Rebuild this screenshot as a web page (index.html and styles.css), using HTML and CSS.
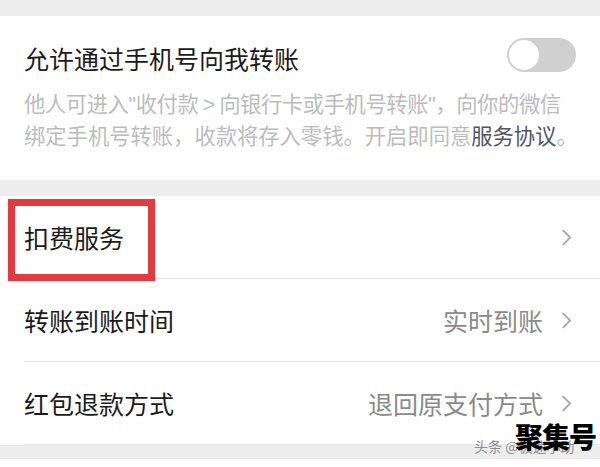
FILE: index.html
```html
<html>
    <head>
        <meta charset="UTF-8">
        <title>转账设置</title>
        <meta name="viewport" content="width=device-width, initial-scale=1.0">
        <link rel="stylesheet" href="styles.css">
    </head>
    <body>
        <div class="gap top-gap"></div>

        <section class="card phone-card">
            <div class="switch-row">
                <span class="title">允许通过手机号向我转账</span>
                <span class="toggle"><span class="knob"></span></span>
            </div>
            <p class="desc">
                <span class="line first">他人可进入<span class="q">"</span>收付款 <span class="q">&gt;</span> 向银行卡或手机号转账<span class="q">"</span>，向你的微信</span>
                <span class="line">绑定手机号转账，收款将存入零钱。开启即同意<span class="link">服务协议</span>。</span>
            </p>
        </section>

        <div class="gap mid-gap"></div>

        <section class="card list-card">
            <div class="row">
                <span class="label">扣费服务</span>
                <span class="value"></span>
                <svg class="chevron" viewBox="0 0 12 20"><path d="M2 2 L10 10 L2 18"/></svg>
            </div>
            <div class="row">
                <span class="label">转账到账时间</span>
                <span class="value">实时到账</span>
                <svg class="chevron" viewBox="0 0 12 20"><path d="M2 2 L10 10 L2 18"/></svg>
            </div>
            <div class="row">
                <span class="label">红包退款方式</span>
                <span class="value">退回原支付方式</span>
                <svg class="chevron" viewBox="0 0 12 20"><path d="M2 2 L10 10 L2 18"/></svg>
            </div>
            <div class="mark"></div>
        </section>

        <div class="gap bottom-gap"></div>
        <div class="tail"></div>

        <div class="watermark">
            <span class="wm-small">头条 @极速小助</span>
            <span class="wm-big">聚集号</span>
        </div>
    </body>
</html>
```

FILE: styles.css
```css
html {
    background-color: #ffffff;
}

body {
    margin: 0;
    width: 600px;
    height: 467px;
    overflow: hidden;
    position: relative;
    font-family: "Noto Sans CJK SC", "Noto Sans", sans-serif;
    color: #1b1b1b;
}

.gap {
    background-color: #ededed;
}

.top-gap { height: 16px; }
.mid-gap { height: 16px; }
.bottom-gap { height: 14px; }
.tail { height: 10px; background-color: #fff; }

.card {
    background-color: #fff;
}

.phone-card {
    height: 164px;
    padding: 0 24px;
    box-sizing: border-box;
}

.switch-row {
    display: flex;
    align-items: center;
    justify-content: space-between;
    height: 40px;
    padding-top: 22px;
}

.title {
    font-size: 25px;
    line-height: 40px;
}

.toggle {
    width: 69px;
    height: 34px;
    border-radius: 17px;
    background-color: #d0d0d0;
    display: flex;
    align-items: center;
    padding-left: 2px;
    box-sizing: border-box;
    margin-top: -6px;
}

.knob {
    width: 30px;
    height: 30px;
    border-radius: 50%;
    background-color: #fff;
}

.desc {
    margin: 10px 0 0;
    font-size: 21.3px;
    line-height: 29px;
    color: #bcbcbc;
}

.line {
    display: block;
    white-space: nowrap;
}

.first {
    letter-spacing: -0.4px;
}

.q {
    font-family: "Liberation Sans", sans-serif;
}

.link {
    color: #4f5566;
}

.list-card {
    position: relative;
}

.row {
    display: flex;
    align-items: center;
    height: 82px;
    margin-left: 24px;
    padding-right: 28px;
    border-bottom: 1px solid #e6e6e6;
}

.row:last-of-type {
    border-bottom: none;
}

.label {
    font-size: 25px;
    flex: 1;
}

.value {
    font-size: 25px;
    color: #8a8a8a;
    margin-right: 18px;
}

.chevron {
    width: 11px;
    height: 19px;
    fill: none;
    stroke: #a8a8a8;
    stroke-width: 2;
}

/* red annotation box drawn over the first row */
.mark {
    position: absolute;
    left: 8px;
    top: 3px;
    width: 147px;
    height: 82px;
    box-sizing: border-box;
    border: 7px solid #e23a3f;
}

.watermark {
    position: absolute;
    right: 4px;
    top: 418px;
    width: 130px;
    height: 40px;
}

.wm-small {
    position: absolute;
    left: 8px;
    top: 18px;
    font-size: 14px;
    color: #8e8e8e;
}

.wm-big {
    position: absolute;
    right: 0;
    top: -2px;
    font-size: 28px;
    font-weight: 900;
    color: #000;
    letter-spacing: -1px;
}
```
